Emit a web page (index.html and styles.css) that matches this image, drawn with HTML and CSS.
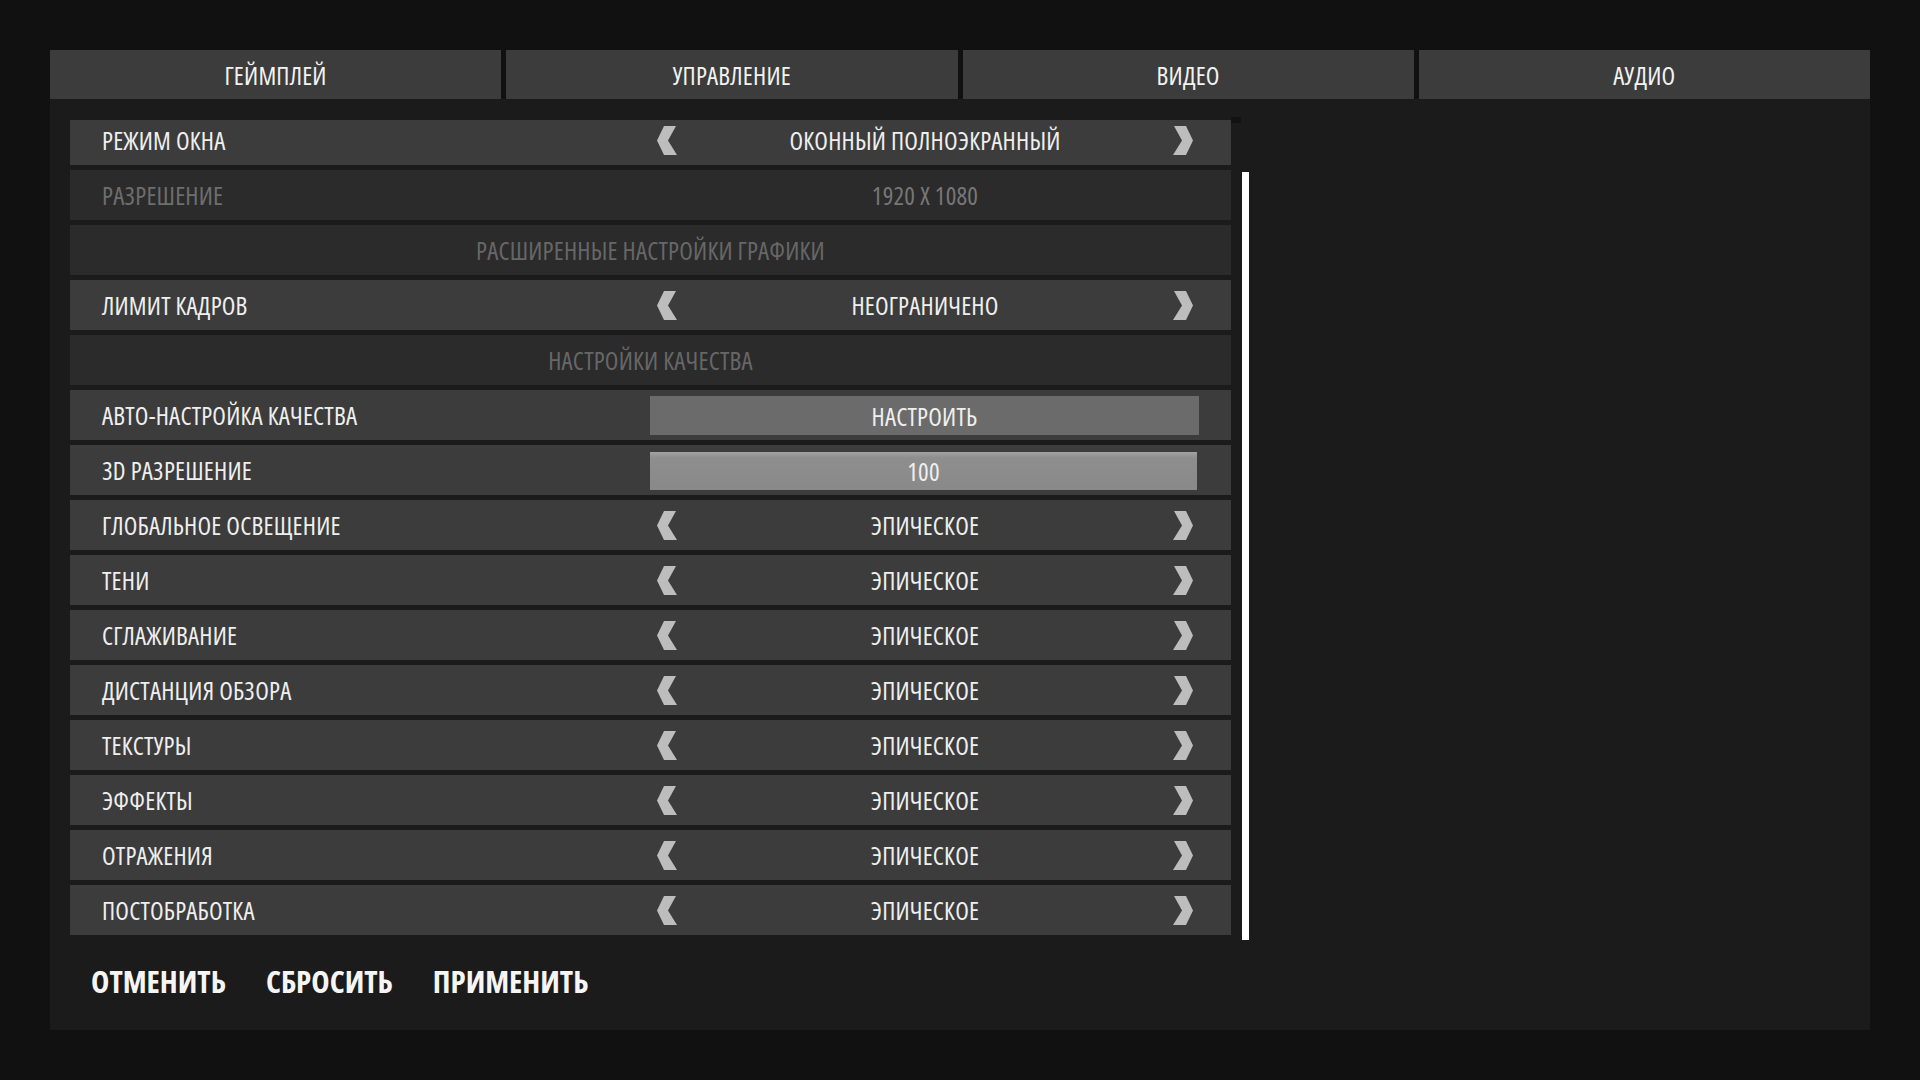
FILE: index.html
```html
<!DOCTYPE html>
<html lang="ru">
<head>
    <meta charset="UTF-8">
    <title>Настройки</title>
    <link rel="stylesheet" href="styles.css">
</head>
<body>

    <div class="menu">
        <!-- Tabs -->
        <div class="tabs">
            <div class="tab">ГЕЙМПЛЕЙ</div>
            <div class="tab">УПРАВЛЕНИЕ</div>
            <div class="tab">ВИДЕО</div>
            <div class="tab">АУДИО</div>
        </div>

        <div class="panel">
            <div class="settings">
                <div class="list-wrap">
                    <div class="list">
                        <div class="row">
                            <span class="label">РЕЖИМ ОКНА</span>
                            <div class="control"><svg class="arrow" viewBox="0 0 20 29"><polygon points="7,0 19,0 11,14.5 20,29 7,29 0,14.5"/></svg><span>ОКОННЫЙ ПОЛНОЭКРАННЫЙ</span><svg class="arrow" viewBox="0 0 20 29"><polygon points="1,0 13,0 20,14.5 13,29 0,29 9,14.5"/></svg></div>
                        </div>
                        <div class="row disabled">
                            <span class="label">РАЗРЕШЕНИЕ</span>
                            <div class="control center"><span>1920 X 1080</span></div>
                        </div>
                        <div class="row section">РАСШИРЕННЫЕ НАСТРОЙКИ ГРАФИКИ</div>
                        <div class="row">
                            <span class="label">ЛИМИТ КАДРОВ</span>
                            <div class="control"><svg class="arrow" viewBox="0 0 20 29"><polygon points="7,0 19,0 11,14.5 20,29 7,29 0,14.5"/></svg><span>НЕОГРАНИЧЕНО</span><svg class="arrow" viewBox="0 0 20 29"><polygon points="1,0 13,0 20,14.5 13,29 0,29 9,14.5"/></svg></div>
                        </div>
                        <div class="row section">НАСТРОЙКИ КАЧЕСТВА</div>
                        <div class="row">
                            <span class="label">АВТО-НАСТРОЙКА КАЧЕСТВА</span>
                            <div class="control plain"><div class="action-btn">НАСТРОИТЬ</div></div>
                        </div>
                        <div class="row">
                            <span class="label">3D РАЗРЕШЕНИЕ</span>
                            <div class="control plain"><div class="slider"><div class="slider-fill" style="width: 100%"></div><span class="slider-value">100</span></div></div>
                        </div>
                        <div class="row">
                            <span class="label">ГЛОБАЛЬНОЕ ОСВЕЩЕНИЕ</span>
                            <div class="control"><svg class="arrow" viewBox="0 0 20 29"><polygon points="7,0 19,0 11,14.5 20,29 7,29 0,14.5"/></svg><span>ЭПИЧЕСКОЕ</span><svg class="arrow" viewBox="0 0 20 29"><polygon points="1,0 13,0 20,14.5 13,29 0,29 9,14.5"/></svg></div>
                        </div>
                        <div class="row">
                            <span class="label">ТЕНИ</span>
                            <div class="control"><svg class="arrow" viewBox="0 0 20 29"><polygon points="7,0 19,0 11,14.5 20,29 7,29 0,14.5"/></svg><span>ЭПИЧЕСКОЕ</span><svg class="arrow" viewBox="0 0 20 29"><polygon points="1,0 13,0 20,14.5 13,29 0,29 9,14.5"/></svg></div>
                        </div>
                        <div class="row">
                            <span class="label">СГЛАЖИВАНИЕ</span>
                            <div class="control"><svg class="arrow" viewBox="0 0 20 29"><polygon points="7,0 19,0 11,14.5 20,29 7,29 0,14.5"/></svg><span>ЭПИЧЕСКОЕ</span><svg class="arrow" viewBox="0 0 20 29"><polygon points="1,0 13,0 20,14.5 13,29 0,29 9,14.5"/></svg></div>
                        </div>
                        <div class="row">
                            <span class="label">ДИСТАНЦИЯ ОБЗОРА</span>
                            <div class="control"><svg class="arrow" viewBox="0 0 20 29"><polygon points="7,0 19,0 11,14.5 20,29 7,29 0,14.5"/></svg><span>ЭПИЧЕСКОЕ</span><svg class="arrow" viewBox="0 0 20 29"><polygon points="1,0 13,0 20,14.5 13,29 0,29 9,14.5"/></svg></div>
                        </div>
                        <div class="row">
                            <span class="label">ТЕКСТУРЫ</span>
                            <div class="control"><svg class="arrow" viewBox="0 0 20 29"><polygon points="7,0 19,0 11,14.5 20,29 7,29 0,14.5"/></svg><span>ЭПИЧЕСКОЕ</span><svg class="arrow" viewBox="0 0 20 29"><polygon points="1,0 13,0 20,14.5 13,29 0,29 9,14.5"/></svg></div>
                        </div>
                        <div class="row">
                            <span class="label">ЭФФЕКТЫ</span>
                            <div class="control"><svg class="arrow" viewBox="0 0 20 29"><polygon points="7,0 19,0 11,14.5 20,29 7,29 0,14.5"/></svg><span>ЭПИЧЕСКОЕ</span><svg class="arrow" viewBox="0 0 20 29"><polygon points="1,0 13,0 20,14.5 13,29 0,29 9,14.5"/></svg></div>
                        </div>
                        <div class="row">
                            <span class="label">ОТРАЖЕНИЯ</span>
                            <div class="control"><svg class="arrow" viewBox="0 0 20 29"><polygon points="7,0 19,0 11,14.5 20,29 7,29 0,14.5"/></svg><span>ЭПИЧЕСКОЕ</span><svg class="arrow" viewBox="0 0 20 29"><polygon points="1,0 13,0 20,14.5 13,29 0,29 9,14.5"/></svg></div>
                        </div>
                        <div class="row">
                            <span class="label">ПОСТОБРАБОТКА</span>
                            <div class="control"><svg class="arrow" viewBox="0 0 20 29"><polygon points="7,0 19,0 11,14.5 20,29 7,29 0,14.5"/></svg><span>ЭПИЧЕСКОЕ</span><svg class="arrow" viewBox="0 0 20 29"><polygon points="1,0 13,0 20,14.5 13,29 0,29 9,14.5"/></svg></div>
                        </div>
                    </div>
                </div>
                <div class="scrollbar">
                    <div class="scroll-cap"></div>
                    <div class="scroll-thumb"></div>
                </div>
            </div>

            <!-- Bottom buttons -->
            <div class="actions">
                <button class="text-btn">ОТМЕНИТЬ</button>
                <button class="text-btn">СБРОСИТЬ</button>
                <button class="text-btn">ПРИМЕНИТЬ</button>
            </div>
        </div>
    </div>

</body>
</html>
```

FILE: styles.css
```css
/* General reset */
* {
    margin: 0;
    padding: 0;
    box-sizing: border-box;
}

body {
    background-color: #111111;
    color: #EFEFEF;
    font-family: "Open Sans", "Noto Sans", sans-serif;
    font-stretch: 77%;
    font-weight: 370;
    font-size: 25px;
    letter-spacing: 0.2px;
}

.menu {
    padding: 50px 50px 0 50px;
    width: 1920px;
}

/* Tabs */
.tabs {
    display: flex;
    gap: 5px;
}

.tab {
    flex: 1;
    height: 49px;
    background-color: #3C3C3C;
    display: flex;
    align-items: center;
    justify-content: center;
    color: #F2F2F2;
}

/* Panel */
.panel {
    background-color: #1B1B1B;
    height: 931px;
    padding: 21px 20px 0 20px;
}

.settings {
    display: flex;
    height: 820px;
}

.list-wrap {
    width: 1161px;
    height: 820px;
    overflow: hidden;
}

.list {
    margin-top: -5px;
    display: flex;
    flex-direction: column;
    gap: 5px;
}

.row {
    height: 50px;
    background-color: #3C3C3C;
    display: flex;
    align-items: center;
    padding-left: 32px;
    flex-shrink: 0;
}

.row .label {
    flex: 1;
}

.row.disabled {
    background-color: #2B2B2B;
    color: #6E6E6E;
}

.row.disabled .control {
    color: #777777;
}

.row.section {
    background-color: #2B2B2B;
    color: #676767;
    justify-content: center;
    padding-left: 0;
}

.control {
    width: 549px;
    margin-right: 32px;
    height: 100%;
    display: flex;
    align-items: center;
    justify-content: space-between;
    padding: 0 6px 0 7px;
}

.control.center {
    justify-content: center;
}

.control.plain {
    padding: 0;
}

.arrow {
    width: 20px;
    height: 29px;
    fill: #BDBDBD;
}

.action-btn {
    width: 100%;
    height: 39px;
    margin-top: 1px;
    background-color: #6B6B6B;
    display: flex;
    align-items: center;
    justify-content: center;
}

.slider {
    position: relative;
    width: 547px;
    height: 38px;
    margin-top: 2px;
    background-color: #555555;
    display: flex;
    align-items: center;
    justify-content: center;
}

.slider-fill {
    position: absolute;
    left: 0;
    top: 0;
    bottom: 0;
    background: linear-gradient(#A4A4A4, #8E8E8E 15%, #898989);
}

.slider-value {
    position: relative;
}

/* Scrollbar */
.scrollbar {
    width: 19px;
    display: flex;
    flex-direction: column;
}

.scroll-cap {
    width: 10px;
    height: 6px;
    margin-top: -3px;
    background-color: #121212;
}

.scroll-thumb {
    width: 7px;
    height: 768px;
    margin: 49px 0 0 11px;
    background-color: #FFFFFF;
}

/* Bottom buttons */
.actions {
    display: flex;
    gap: 40px;
    padding: 23px 0 0 21px;
}

.text-btn {
    background: none;
    border: none;
    color: #F5F5F5;
    font-family: "Open Sans", "Noto Sans", sans-serif;
    font-stretch: 75%;
    font-size: 31px;
    line-height: 1.2;
    font-weight: 700;
    cursor: pointer;
}
```
